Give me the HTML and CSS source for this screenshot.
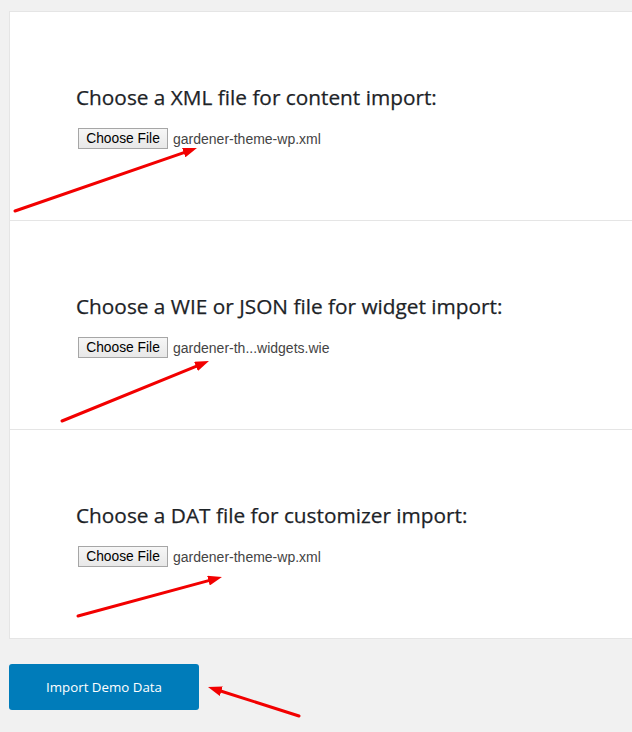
FILE: index.html
```html
<!DOCTYPE html>
<html lang="en">
<head>
<meta charset="utf-8">
<title>Import Demo Data</title>
<link rel="stylesheet" href="styles.css">
</head>
<body>
<div class="page">
  <div class="card">
    <section class="section">
      <h3 class="title">Choose a XML file for content import:</h3>
      <div class="file-row">
        <button class="file-btn" type="button">Choose File</button>
        <span class="file-name">gardener-theme-wp.xml</span>
      </div>
    </section>
    <section class="section">
      <h3 class="title">Choose a WIE or JSON file for widget import:</h3>
      <div class="file-row">
        <button class="file-btn" type="button">Choose File</button>
        <span class="file-name">gardener-th...widgets.wie</span>
      </div>
    </section>
    <section class="section">
      <h3 class="title">Choose a DAT file for customizer import:</h3>
      <div class="file-row">
        <button class="file-btn" type="button">Choose File</button>
        <span class="file-name">gardener-theme-wp.xml</span>
      </div>
    </section>
  </div>
  <div class="actions">
    <button class="import-btn" type="button">Import Demo Data</button>
  </div>
</div>
<svg class="annotations" width="632" height="732" viewBox="0 0 632 732" aria-hidden="true">
  <defs>
    <marker id="head" markerUnits="userSpaceOnUse" markerWidth="14" markerHeight="10" refX="4" refY="5" orient="auto">
      <path d="M0,0 L14,5 L0,10 z" fill="#f20000"/>
    </marker>
  </defs>
  <g stroke="#f20000" stroke-width="3" stroke-linecap="round" fill="none">
    <line x1="15" y1="211" x2="187.5" y2="151.3" marker-end="url(#head)"/>
    <line x1="62" y1="421" x2="199.7" y2="364.8" marker-end="url(#head)"/>
    <line x1="78" y1="616" x2="212.3" y2="579.6" marker-end="url(#head)"/>
    <line x1="299" y1="716" x2="217.5" y2="690" marker-end="url(#head)"/>
  </g>
</svg>
</body>
</html>
```

FILE: styles.css
```css
html, body {
  margin: 0;
  padding: 0;
}
body {
  background: #f1f1f1;
  width: 632px;
  height: 732px;
  overflow: hidden;
  position: relative;
  font-family: "Open Sans", "Noto Sans", sans-serif;
}
.page {
  padding: 11px 0 0 9px;
}
.card {
  background: #ffffff;
  border: 1px solid #e5e5e5;
  border-right: none;
}
.section {
  height: 208px;
  box-sizing: border-box;
  padding: 72px 0 0 67px;
}
.section + .section {
  border-top: 1px solid #e5e5e5;
  height: 209px;
}
.title {
  margin: 0 0 0 -1px;
  font-size: 20.8px;
  line-height: 26px;
  font-weight: 400;
  color: #1d2327;
  -webkit-text-stroke: 0.25px #1d2327;
}
.file-row {
  display: flex;
  align-items: center;
  gap: 5px;
  margin-top: 18px;
  margin-left: 1px;
}
.file-btn {
  box-sizing: border-box;
  height: 21px;
  width: 90px;
  padding: 0;
  border: 1px solid #a6a6a6;
  border-radius: 0;
  background: linear-gradient(#f6f6f6, #e8e8e8);
  font-family: "Liberation Sans", Arial, sans-serif;
  font-size: 13.8px;
  color: #000;
}
.file-name {
  font-family: "Liberation Sans", Arial, sans-serif;
  font-size: 14px;
  color: #444;
}
.actions {
  padding-top: 25px;
}
.import-btn {
  display: block;
  width: 190px;
  height: 46px;
  border: none;
  border-radius: 3px;
  background: #007cba;
  color: #fff;
  font-family: "Open Sans", "Noto Sans", sans-serif;
  font-size: 13.3px;
  padding: 0;
}
.annotations {
  position: absolute;
  left: 0;
  top: 0;
  pointer-events: none;
}
```
